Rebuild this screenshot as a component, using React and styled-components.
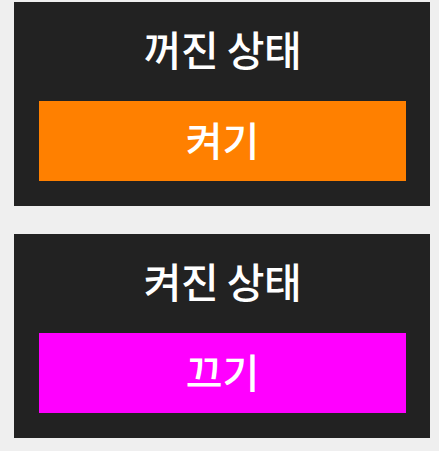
import React from "react";
import styled, { createGlobalStyle } from "styled-components";

const Global = createGlobalStyle`
  html, body { margin: 0; padding: 0; background: #efefef; }
  body { font-family: "Noto Sans CJK KR", "Noto Sans", sans-serif; }
`;

const Page = styled.div`
  display: flex;
  flex-direction: column;
  gap: 28px;
  padding: 2px 9px 0 14px;
`;

const Panel = styled.section`
  width: 416px;
  box-sizing: border-box;
  background: #222222;
  padding: 0 24px 25px 25px;
  display: flex;
  flex-direction: column;
`;

const Title = styled.h2`
  margin: 0;
  height: 99px;
  display: flex;
  align-items: center;
  justify-content: center;
  padding-bottom: 7px;
  box-sizing: border-box;
  color: #ffffff;
  font-size: 41px;
  font-weight: 500;
  letter-spacing: -0.5px;
`;

const ToggleButton = styled.button`
  height: 80px;
  width: 100%;
  border: none;
  margin: 0;
  padding: 0 0 4px;
  background: ${(p) => p.$bg};
  color: #ffffff;
  font-family: inherit;
  font-size: 40px;
  font-weight: 500;
  cursor: pointer;
`;

export default function App() {
  return (
    <>
      <Global />
      <Page>
        <Panel>
          <Title>꺼진 상태</Title>
          <ToggleButton $bg="#ff8000">켜기</ToggleButton>
        </Panel>
        <Panel>
          <Title>켜진 상태</Title>
          <ToggleButton $bg="#ff00ff">끄기</ToggleButton>
        </Panel>
      </Page>
    </>
  );
}
